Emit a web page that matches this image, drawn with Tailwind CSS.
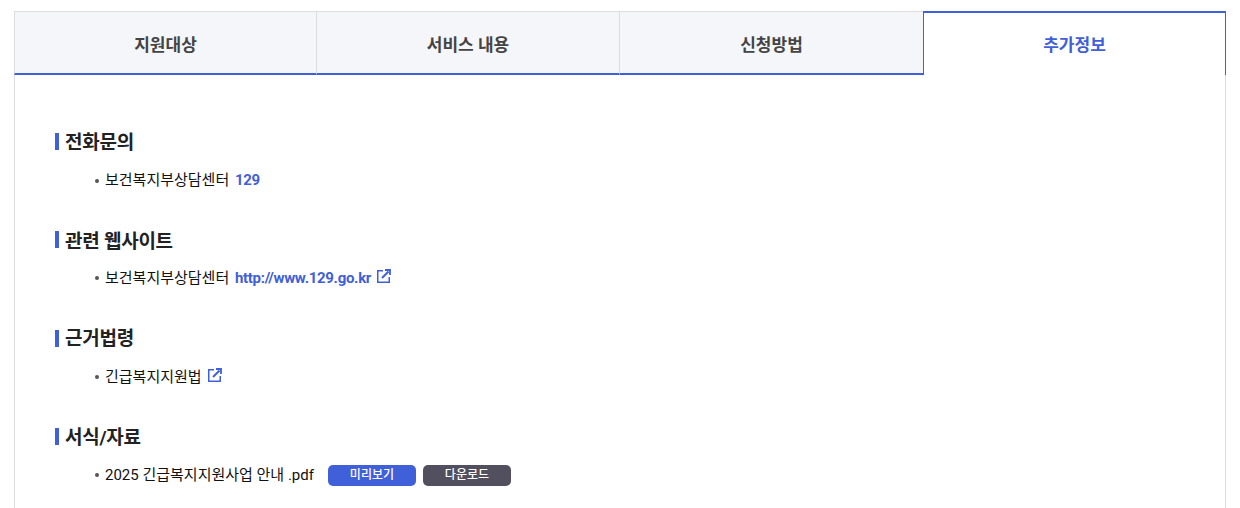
<!DOCTYPE html>
<html lang="ko">
<head>
  <meta charset="UTF-8" />
  <title>추가정보</title>
  <script src="https://cdn.jsdelivr.net/npm/@tailwindcss/browser@4"></script>
</head>
<body class="bg-white h-[508px] overflow-hidden font-['Roboto','Noto_Sans_CJK_KR',sans-serif] text-[#111]">
  <div class="mx-[14px] pt-[11px] h-[508px] overflow-hidden">
    <!-- 탭 -->
    <ul class="grid grid-cols-[302px_303px_304px_303px] h-[64px]">
      <li class="flex items-center justify-center pt-[6px] bg-[#f5f6fa] border-t border-l border-[#ddd] border-b-2 border-b-[#3f60d8] text-[17px] font-semibold text-[#444]">지원대상</li>
      <li class="flex items-center justify-center pt-[6px] bg-[#f5f6fa] border-t border-l border-[#ddd] border-b-2 border-b-[#3f60d8] text-[17px] font-semibold text-[#444]">서비스 내용</li>
      <li class="flex items-center justify-center pt-[6px] bg-[#f5f6fa] border-t border-l border-[#ddd] border-b-2 border-b-[#3f60d8] text-[17px] font-semibold text-[#444]">신청방법</li>
      <li class="flex items-center justify-center pt-[3px] bg-white border-t-2 border-x border-[#3f60d8] text-[17px] font-semibold text-[#3f60d8]">추가정보</li>
    </ul>

    <!-- 내용 -->
    <div class="border-x border-[#ddd] pt-[52.5px] pl-[40px] h-[500px]">
      <section class="h-[98.33px]">
        <h3 class="flex items-center gap-[6px] h-[28px] text-[19px] font-bold tracking-[-0.25px] text-[#222]"><span class="w-[4px] h-[17px] bg-[#3f60d8]"></span><span class="pt-[3px]">전화문의</span></h3>
        <p class="flex items-center h-[24px] mt-[13px] ml-[40px] text-[15px]"><span class="w-[4px] h-[4px] rounded-full bg-[#555] mr-[6px]"></span>보건복지부상담센터&nbsp;<b class="ml-[2px] font-bold text-[#3f60d8] tracking-[-0.3px]">129</b></p>
      </section>
      <section class="h-[98.33px]">
        <h3 class="flex items-center gap-[6px] h-[28px] text-[19px] font-bold tracking-[-0.25px] text-[#222]"><span class="w-[4px] h-[17px] bg-[#3f60d8]"></span><span class="pt-[4px]">관련 웹사이트</span></h3>
        <p class="flex items-center h-[24px] mt-[12.5px] ml-[40px] text-[15px]"><span class="w-[4px] h-[4px] rounded-full bg-[#555] mr-[6px]"></span>보건복지부상담센터&nbsp;<b class="ml-[2px] font-bold text-[#3f60d8] tracking-[-0.3px]">http://www.129.go.kr</b>
          <svg class="ml-[6px] mb-[4px]" width="14" height="14" viewBox="0 0 14 14" fill="none" stroke="#3f60d8" stroke-width="1.5"><path d="M6 1.75H.75V13.25H12.25V8"/><path d="M5 9L11.5 2.5" stroke-width="2"/><path d="M8 1H13V6" stroke-width="1.8"/></svg>
        </p>
      </section>
      <section class="h-[98.33px]">
        <h3 class="flex items-center gap-[6px] h-[28px] text-[19px] font-bold tracking-[-0.25px] text-[#222]"><span class="w-[4px] h-[17px] bg-[#3f60d8]"></span><span class="pt-[3px]">근거법령</span></h3>
        <p class="flex items-center h-[24px] mt-[13px] ml-[40px] text-[15px]"><span class="w-[4px] h-[4px] rounded-full bg-[#555] mr-[6px]"></span>긴급복지지원법
          <svg class="ml-[6px] mb-[5px]" width="14" height="14" viewBox="0 0 14 14" fill="none" stroke="#3f60d8" stroke-width="1.5"><path d="M6 1.75H.75V13.25H12.25V8"/><path d="M5 9L11.5 2.5" stroke-width="2"/><path d="M8 1H13V6" stroke-width="1.8"/></svg>
        </p>
      </section>
      <section>
        <h3 class="flex items-center gap-[6px] h-[28px] text-[19px] font-bold tracking-[-0.25px] text-[#222]"><span class="w-[4px] h-[17px] bg-[#3f60d8]"></span><span class="pt-[4px]">서식/자료</span></h3>
        <p class="flex items-center h-[24px] mt-[13px] ml-[40px] text-[15px]"><span class="w-[4px] h-[4px] rounded-full bg-[#555] mr-[6px]"></span>2025 긴급복지지원사업 안내 .pdf
          <a class="flex items-center justify-center w-[88px] h-[21px] ml-[14px] rounded-[5px] bg-[#3f60d8] text-white text-[12px] font-medium">미리보기</a>
          <a class="flex items-center justify-center w-[88px] h-[21px] ml-[7px] rounded-[5px] bg-[#52505f] text-white text-[12px] font-medium">다운로드</a>
        </p>
      </section>
    </div>
  </div>
</body>
</html>
